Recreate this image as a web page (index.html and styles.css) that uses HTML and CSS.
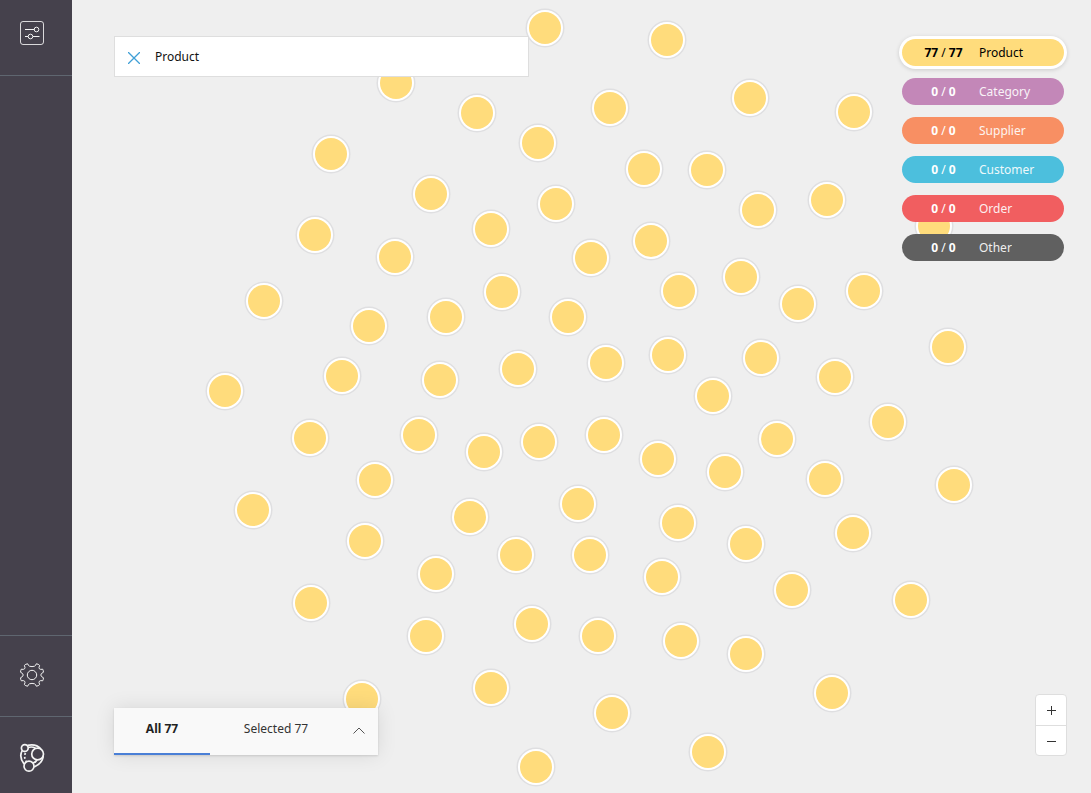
FILE: index.html
```html
<!DOCTYPE html>
<html lang="en">
<head>
<meta charset="utf-8">
<title>Graph explorer</title>
<link rel="stylesheet" href="styles.css">
</head>
<body>
<svg class="graph" role="img" aria-label="Product nodes">
  <defs>
    <g id="n">
      <circle class="node-halo" r="18.500"/>
      <circle class="node-ring" r="18"/>
      <circle class="node-fill" r="16"/>
    </g>
  </defs>
  <use href="#n" x="545" y="28"/><use href="#n" x="667" y="40"/><use href="#n" x="396" y="83"/>
  <use href="#n" x="477" y="113"/><use href="#n" x="610" y="108"/><use href="#n" x="750" y="98"/>
  <use href="#n" x="854" y="112"/><use href="#n" x="538" y="143"/><use href="#n" x="331" y="154"/>
  <use href="#n" x="644" y="169"/><use href="#n" x="707" y="170"/><use href="#n" x="431" y="194"/>
  <use href="#n" x="556" y="204"/><use href="#n" x="758" y="210"/><use href="#n" x="827" y="200"/>
  <use href="#n" x="934" y="226"/><use href="#n" x="315" y="235"/><use href="#n" x="491" y="229"/>
  <use href="#n" x="395" y="257"/><use href="#n" x="591" y="258"/><use href="#n" x="651" y="241"/>
  <use href="#n" x="741" y="277"/><use href="#n" x="502" y="292"/><use href="#n" x="679" y="291"/>
  <use href="#n" x="264" y="301"/><use href="#n" x="798" y="304"/><use href="#n" x="864" y="291"/>
  <use href="#n" x="446" y="317"/><use href="#n" x="568" y="317"/><use href="#n" x="369" y="326"/>
  <use href="#n" x="948" y="347"/><use href="#n" x="668" y="355"/><use href="#n" x="761" y="358"/>
  <use href="#n" x="606" y="363"/><use href="#n" x="518" y="369"/><use href="#n" x="342" y="376"/>
  <use href="#n" x="440" y="380"/><use href="#n" x="835" y="377"/><use href="#n" x="225" y="391"/>
  <use href="#n" x="713" y="396"/><use href="#n" x="888" y="422"/><use href="#n" x="419" y="435"/>
  <use href="#n" x="604" y="435"/><use href="#n" x="310" y="438"/><use href="#n" x="539" y="442"/>
  <use href="#n" x="777" y="439"/><use href="#n" x="484" y="452"/><use href="#n" x="658" y="459"/>
  <use href="#n" x="725" y="472"/><use href="#n" x="825" y="479"/><use href="#n" x="375" y="480"/>
  <use href="#n" x="954" y="485"/><use href="#n" x="253" y="510"/><use href="#n" x="578" y="504"/>
  <use href="#n" x="470" y="517"/><use href="#n" x="678" y="523"/><use href="#n" x="853" y="533"/>
  <use href="#n" x="365" y="541"/><use href="#n" x="746" y="544"/><use href="#n" x="516" y="555"/>
  <use href="#n" x="590" y="555"/><use href="#n" x="436" y="574"/><use href="#n" x="662" y="577"/>
  <use href="#n" x="792" y="590"/><use href="#n" x="311" y="603"/><use href="#n" x="911" y="600"/>
  <use href="#n" x="532" y="624"/><use href="#n" x="426" y="636"/><use href="#n" x="598" y="636"/>
  <use href="#n" x="681" y="641"/><use href="#n" x="746" y="654"/><use href="#n" x="491" y="688"/>
  <use href="#n" x="832" y="693"/><use href="#n" x="362" y="699"/><use href="#n" x="612" y="713"/>
  <use href="#n" x="708" y="752"/><use href="#n" x="536" y="767"/>
</svg>

<div class="app">
  <nav class="sidebar" aria-label="Main">
    <button class="side-btn side-filters" aria-label="Filters">
      <svg width="24" height="24" viewBox="0 0 24 24">
        <rect x=".5" y=".5" width="23" height="23" rx="2.5" opacity=".85"/>
        <path d="M5 8.500h9.500M5 15.500h3M13 15.500h6.500"/>
        <circle cx="16.500" cy="8.500" r="2.300"/><circle cx="10.500" cy="15.500" r="2.300"/>
      </svg>
    </button>
    <button class="side-btn side-settings" aria-label="Settings">
      <svg width="24" height="24" viewBox="0 0 24 24">
        <circle cx="12" cy="12" r="4.700"/>
        <path d="M9.500 3.200Q8.300 2.800 7.700.8 5.500 1 4.400 2.400 5.500 5 4.600 5.800 3.600 6.800 1.300 6.200.5 7.500.6 9.300 3.200 10.300 3.200 12T.6 14.700Q.5 16.500 1.300 17.800 3.600 17.200 4.600 18.200 5.500 19 4.400 21.600 5.500 23 7.700 23.200 8.300 21.200 9.500 20.800 12 19.900 14.500 20.800 15.700 21.200 16.300 23.200 18.500 23 19.600 21.600 18.500 19 19.400 18.200 20.400 17.200 22.700 17.800 23.500 16.500 23.400 14.700 20.800 13.700 20.800 12T23.400 9.300Q23.500 7.500 22.700 6.200 20.400 6.800 19.400 5.800 18.500 5 19.600 2.400 18.500 1 16.300.8 15.700 2.800 14.500 3.200 12 4.100 9.500 3.200z" stroke-linejoin="round"/>
      </svg>
    </button>
    <button class="side-btn side-brand" aria-label="About">
      <svg width="26" height="30" viewBox="0 0 26 30">
        <g stroke-width="1.700">
          <circle cx="5.800" cy="5" r="3.400"/><circle cx="18.600" cy="11" r="5.900"/><circle cx="10" cy="23.200" r="5"/>
          <path d="M8.500 2.400Q17 .5 22 6M9.300 4.500Q13 3.200 16.500 5.300M3.300 7.400Q-.5 14 5.200 21M24.200 12.500Q24 20 15.200 24M18 17Q17 19 14 20"/>
          <path d="M6.500 10Q4.500 14 7.200 18.500" stroke-dasharray="2 2"/>
        </g>
      </svg>
    </button>
  </nav>

  <main class="stage">
    <div class="column column-left">
      <form class="search">
        <button type="button" class="clear" aria-label="Clear search">
          <svg width="12" height="12" viewBox="0 0 12 12"><path d="M0 0l12 12M12 0L0 12"/></svg>
        </button>
        <input type="text" value="Product" aria-label="Search">
      </form>
      <div class="results">
        <button class="tab tab-active">All 77</button>
        <button class="tab tab-selected">Selected 77</button>
        <button class="expand" aria-label="Expand">
          <svg width="12" height="7" viewBox="0 0 12 7"><path d="M.5 6.500L6 1l5.500 5.500"/></svg>
        </button>
      </div>
    </div>
    <div class="column column-right">
      <div class="legend">
        <button class="pill product"><span class="count"><b>77</b> / <b>77</b></span><span>Product</span></button>
        <button class="pill category"><span class="count"><b>0</b> / <b>0</b></span><span class="name">Category</span></button>
        <button class="pill supplier"><span class="count"><b>0</b> / <b>0</b></span><span class="name">Supplier</span></button>
        <button class="pill customer"><span class="count"><b>0</b> / <b>0</b></span><span class="name">Customer</span></button>
        <button class="pill order"><span class="count"><b>0</b> / <b>0</b></span><span class="name">Order</span></button>
        <button class="pill other"><span class="count"><b>0</b> / <b>0</b></span><span class="name">Other</span></button>
      </div>
      <div class="zoom">
        <button aria-label="Zoom in"><svg width="10" height="10" viewBox="0 0 10 10"><path d="M1 5.500h9M5.500 1v9"/></svg></button>
        <button aria-label="Zoom out"><svg width="10" height="10" viewBox="0 0 10 10"><path d="M1 5.500h9"/></svg></button>
      </div>
    </div>
  </main>
</div>
</body>
</html>
```
FILE: styles.css
```css
* { box-sizing: border-box; }

body {
  margin: 0;
  background: #efefef;
  color: #222;
  font: 12px/16px "Noto Sans", "Open Sans", sans-serif;
}

button {
  margin: 0;
  padding: 0;
  border: 0;
  background: none;
  color: inherit;
  font: inherit;
  cursor: pointer;
}

svg { display: block; fill: none; }

/* Graph canvas */
.graph {
  position: absolute;
  inset: 0;
  width: 100%;
  height: 100%;
}
.node-halo { stroke: #dfdfe1; stroke-width: 2; }
.node-ring { fill: #fff; }
.node-fill { fill: #ffdc7c; }

.app {
  position: relative;
  display: flex;
  min-height: 100vh;
}

/* Sidebar */
.sidebar {
  display: flex;
  flex-direction: column;
  flex: 0 0 72px;
  background: #45414c;
}
.side-btn {
  display: flex;
  align-items: center;
  justify-content: center;
  padding-right: 8px;
  stroke: #f4f4f4;
}
.side-filters {
  height: 76px;
  padding-bottom: 9px;
  border-bottom: 1px solid #5f6670;
}
.side-settings {
  height: 81px;
  margin-top: auto;
  padding-bottom: 2px;
  border-top: 1px solid #5f6670;
}
.side-brand {
  height: 77px;
  padding-top: 6px;
  border-top: 1px solid #5f6670;
}

/* Overlays on the canvas */
.stage {
  display: flex;
  flex: 1;
  justify-content: space-between;
  padding: 36px 24px 37px 42px;
}
.column {
  display: flex;
  flex-direction: column;
  justify-content: space-between;
}
.column-left { flex: 0 1 415px; align-items: flex-start; padding-bottom: 1px; }
.column-right { align-items: flex-end; }

.search {
  display: flex;
  align-items: center;
  width: 100%;
  height: 41px;
  padding-left: 13px;
  border: 1px solid #dedede;
  background: #fff;
}
.clear { padding: 2px 15px 0 0; stroke: #3f9fd6; stroke-width: 1.3; }
.search input {
  flex: 1;
  min-width: 0;
  padding: 0;
  border: 0;
  outline: 0;
  background: none;
  color: #111;
  font: inherit;
}

.results {
  display: flex;
  width: 264px;
  height: 47px;
  background: #f9f9f9;
  box-shadow: 0 1px 2px rgba(0, 0, 0, .12), 0 0 20px rgba(0, 0, 0, .1);
}
.tab { padding-bottom: 4px; border-bottom: 2px solid transparent; }
.tab-active {
  width: 96px;
  border-color: #4a7fd6;
  font-weight: 700;
}
.tab-selected { width: 132px; color: #333; }
.expand {
  display: flex;
  flex: 1;
  align-items: center;
  justify-content: center;
  padding: 0 2px 2px 0;
  stroke: #555;
}

.legend {
  display: flex;
  flex-direction: column;
  gap: 12px;
  width: 165px;
  padding: 3px 3px 0 0;
}
.pill {
  display: grid;
  grid-template-columns: 77px 1fr;
  align-items: center;
  height: 27px;
  border-radius: 14px;
  color: #fff;
  text-align: left;
}
.count { padding-left: 6px; text-align: center; }
.name { opacity: .9; }
.product {
  background: #ffdc7c;
  color: #000;
  box-shadow: 0 0 0 3px #fff, 0 1px 4px 3px rgba(0, 0, 0, .15);
}
.category { background: #c387b8; }
.supplier { background: #f88f63; }
.customer { background: #4cbfdd; }
.order { background: #f15e60; }
.other { background: #606060; }

.zoom {
  display: flex;
  flex-direction: column;
  width: 32px;
  border: 1px solid #dedede;
  border-radius: 4px;
  background: #fff;
}
.zoom button {
  display: flex;
  align-items: center;
  justify-content: center;
  height: 30px;
  stroke: #333;
}
.zoom button + button { border-top: 1px solid #dedede; }
```
